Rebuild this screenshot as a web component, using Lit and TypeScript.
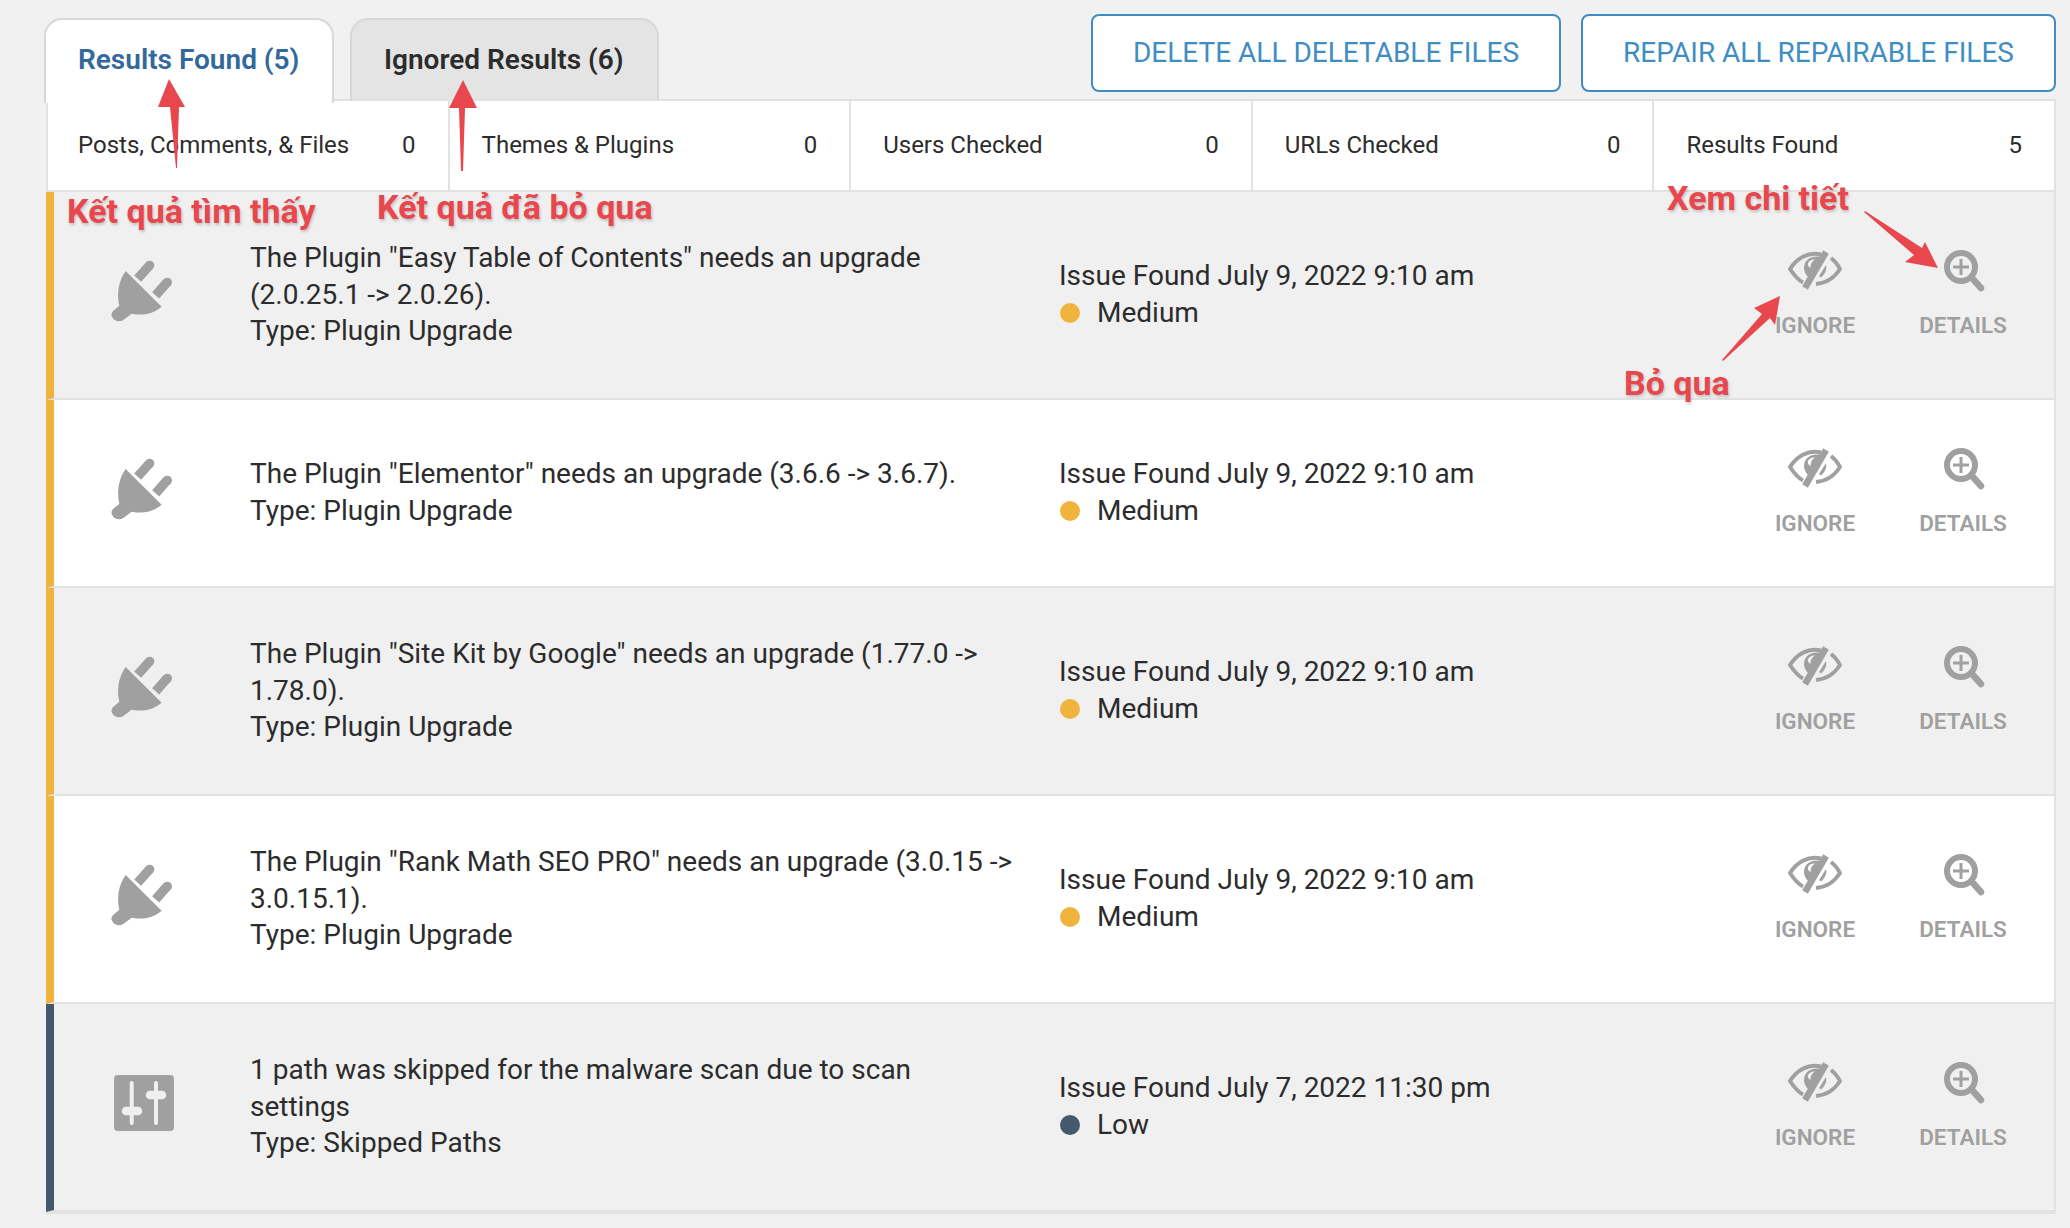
import { LitElement, html, css, svg } from "lit";
import { customElement } from "lit/decorators.js";

const plug = svg`<svg class="kind" viewBox="0 0 360 300" width="120" height="100" fill="#a0a0a0">
  <path d="M107 90 L215 197 C190 218 160 225 125 218 L100 237 C88 245 70 240 65 225 C62 215 70 208 88 195 C80 160 85 120 107 90Z"/>
  <path d="M143 113 L178 74 M197 163 L231 124" stroke="#a0a0a0" stroke-width="28" fill="none"/>
  <circle cx="179" cy="73" r="14"/>
  <circle cx="232" cy="124" r="14"/>
</svg>`;
const sliders = svg`<svg class="kind" viewBox="0 0 120 100" width="120" height="100">
  <rect x="24" y="22" width="60" height="56" rx="4" fill="#a0a0a0"/>
  <path d="M41.700 30 V70 M66 30 V70" stroke="#f0f0f0" stroke-width="4" stroke-linecap="round"/>
  <path d="M36 58 H48 M60 42 H72" stroke="#f0f0f0" stroke-width="8.500" stroke-linecap="round"/>
</svg>`;
const eye = svg`<svg viewBox="0 0 54 42" width="54" height="42" fill="none" stroke="#a0a0a0">
  <path d="M33 4.500 C20 1 8 9 2 19 C6 25 10 30 15 32.500" stroke-width="4"/>
  <path fill-rule="evenodd" d="M33 7 C22 5 16 11 16 18 C16 22 18 25 21 28 Z M20 13 C21 11 24 9 27 9.500 C24 11 22.500 14 22.500 18 C20.500 17 19.500 15 20 13 Z" fill="#a0a0a0" stroke="none"/>
  <path d="M43 8 C47 11 50 15 52 19 C47 27 39 33 28 34" stroke-width="3.800"/>
  <path d="M38 15 C39 20 37 24 33 27.500 L31 26 Z" fill="#a0a0a0" stroke="none"/>
  <path d="M38 2 L17 38" stroke-width="6.500"/>
</svg>`;
const zoom = svg`<svg viewBox="0 0 54 42" width="54" height="42" fill="none" stroke="#a0a0a0">
  <circle cx="25" cy="17" r="14" stroke-width="6"/>
  <path d="M36 28 L45 38" stroke-width="6.500" stroke-linecap="round"/>
  <path d="M17 17 H33 M25 9 V25" stroke-width="3"/>
</svg>`;

type Row = { t: string; type: string; when: string; level: string; kind: "plug" | "sliders" };
const rows: Row[] = [
  { t: 'The Plugin "Easy Table of Contents" needs an upgrade (2.0.25.1 -> 2.0.26).', type: "Plugin Upgrade", when: "July 9, 2022 9:10 am", level: "Medium", kind: "plug" },
  { t: 'The Plugin "Elementor" needs an upgrade (3.6.6 -> 3.6.7).', type: "Plugin Upgrade", when: "July 9, 2022 9:10 am", level: "Medium", kind: "plug" },
  { t: 'The Plugin "Site Kit by Google" needs an upgrade (1.77.0 -> 1.78.0).', type: "Plugin Upgrade", when: "July 9, 2022 9:10 am", level: "Medium", kind: "plug" },
  { t: 'The Plugin "Rank Math SEO PRO" needs an upgrade (3.0.15 -> 3.0.15.1).', type: "Plugin Upgrade", when: "July 9, 2022 9:10 am", level: "Medium", kind: "plug" },
  { t: "1 path was skipped for the malware scan due to scan settings", type: "Skipped Paths", when: "July 7, 2022 11:30 pm", level: "Low", kind: "sliders" },
];
const stats: [string, string][] = [
  ["Posts, Comments, & Files", "0"],
  ["Themes & Plugins", "0"],
  ["Users Checked", "0"],
  ["URLs Checked", "0"],
  ["Results Found", "5"],
];

@customElement("app-root")
export class AppRoot extends LitElement {
  static styles = css`
    :host { display: block; position: relative; width: 2070px; height: 1228px; background: #f1f1f1; font-family: Roboto, sans-serif; color: #2c2c2c; overflow: hidden; }
    .page { display: flex; flex-direction: column; padding: 14px 14px 0 44px; }
    .top { display: flex; align-items: flex-start; height: 87px; }
    .tab { box-sizing: border-box; margin-top: 4px; padding: 0 32px 4px; display: flex; align-items: center; font-size: 28px; font-weight: 600; white-space: nowrap; border: 2px solid #d8d8d8; border-bottom: 0; border-radius: 18px 18px 0 0; background: #e4e4e4; margin-right: 16px; position: relative; }
    .tab.on { background: #fff; color: #32689b; width: 290px; height: 85px; }
    .tab.off { width: 309px; height: 83px; padding-bottom: 2px; }
    .btns { margin-left: auto; display: flex; gap: 20px; }
    .btn { box-sizing: border-box; height: 78px; padding-bottom: 2px; display: flex; align-items: center; justify-content: center; background: #fff; border: 2px solid #3f8dc2; border-radius: 8px; color: #3f8dc2; font-size: 28px; text-transform: uppercase; }
    .btn.a { width: 470px; }
    .btn.b { width: 475px; }
    .panel { box-sizing: border-box; width: 2010px; border: 2px solid #e2e2e2; border-left: 0; margin-left: 2px; margin-top: -2px; }
    .stats { display: grid; grid-template-columns: repeat(5, 1fr); background: #fff; height: 89px; border-bottom: 2px solid #e2e2e2; }
    .stat { display: flex; justify-content: space-between; padding: 28px 32px 0; font-size: 24px; line-height: 32px; border-left: 2px solid #e2e2e2; }
    .stat:first-child { padding-left: 30px; }
    .row { display: grid; grid-template-columns: 120px 764px 1fr auto; column-gap: 40px; align-items: center; min-height: 188px; padding: 48px 36px; box-sizing: border-box; background: #f0f0f0; border-left: 8px solid #f0b43e; border-bottom: 2px solid #e2e2e2; font-size: 28px; line-height: 36.670px; }
    .row:nth-child(even) { background: #fff; }
    .row.low { border-left-color: #44596e; }
    .kind { display: block; margin: -14px 0 -6px; }
    .msg { min-width: 0; }
    .meta { margin-left: 5px; }
    .level { display: flex; align-items: center; gap: 17px; }
    .dot { width: 20px; height: 20px; margin-left: 1px; border-radius: 50%; background: #f0b43e; }
    .row.low .dot { background: #44596e; }
    .acts { display: flex; gap: 38px; margin-top: -2px; }
    .act { width: 110px; display: flex; flex-direction: column; align-items: center; color: #a0a0a0; font-size: 22.500px; font-weight: 600; line-height: 28px; gap: 19px; }
    .note { position: absolute; color: #e7474d; font-size: 34px; font-weight: 700; line-height: 40px; white-space: nowrap; text-shadow: 1px 2px 3px rgba(0,0,0,.2); }
    .n1 { left: 67px; top: 191px; }
    .n2 { left: 377px; top: 187px; }
    .n3 { left: 1667px; top: 178px; }
    .n4 { left: 1624px; top: 363px; }
    .arrows { position: absolute; inset: 0; width: 2070px; height: 1228px; pointer-events: none; }
  `;

  render() {
    return html`
      <div class="page">
        <div class="top">
          <div class="tab on">Results Found (5)</div>
          <div class="tab off">Ignored Results (6)</div>
          <div class="btns">
            <div class="btn a">Delete all deletable files</div>
            <div class="btn b">Repair all repairable files</div>
          </div>
        </div>
        <div class="panel">
          <div class="stats">
            ${stats.map(([k, v]) => html`<div class="stat"><span>${k}</span><span>${v}</span></div>`)}
          </div>
          <div class="rows">
            ${rows.map((r) => html`
              <div class="row ${r.level === "Low" ? "low" : ""}">
                ${r.kind === "plug" ? plug : sliders}
                <div class="msg">${r.t}<br />Type: ${r.type}</div>
                <div class="meta">
                  <div>Issue Found ${r.when}</div>
                  <div class="level"><span class="dot"></span>${r.level}</div>
                </div>
                <div class="acts">
                  <div class="act">${eye}<span>IGNORE</span></div>
                  <div class="act">${zoom}<span>DETAILS</span></div>
                </div>
              </div>
            `)}
          </div>
        </div>
      </div>
      <svg class="arrows" viewBox="0 0 2070 1228" fill="#e7474d">
        <polygon points="169,79 185,107 179,107 177,168 176,168 170,107 158,107"/>
        <polygon points="463,80 477,108 465,108 463,171 461,171 459,108 449,108"/>
        <polygon points="1938,268 1925,242 1922,248 1865,211 1864,212 1914,255 1905,262"/>
        <polygon points="1780,296 1754,308 1762,314 1722,360 1723,361 1770,318 1775,325"/>
      </svg>
      <div class="note n1">Kết quả tìm thấy</div>
      <div class="note n2">Kết quả đã bỏ qua</div>
      <div class="note n3">Xem chi tiết</div>
      <div class="note n4">Bỏ qua</div>
    `;
  }
}
